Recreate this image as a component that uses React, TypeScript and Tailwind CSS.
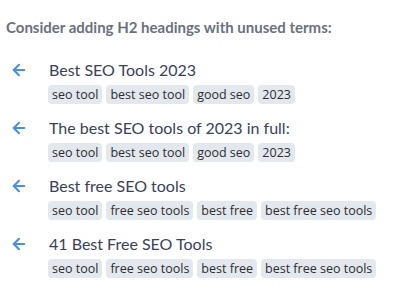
import { ArrowLeft } from 'lucide-react';

export default function App() {
    const suggestions = [
        { title: "Best SEO Tools 2023", terms: ['seo tool', 'best seo tool', 'good seo', '2023'] },
        { title: "The best SEO tools of 2023 in full:", terms: ['seo tool', 'best seo tool', 'good seo', '2023'] },
        { title: "Best free SEO tools", terms: ['seo tool', 'free seo tools', 'best free', 'best free seo tools'] },
        { title: "41 Best Free SEO Tools", terms: ['seo tool', 'free seo tools', 'best free', 'best free seo tools'] }
    ];

    return (
        <div className="w-[396px] h-[290px] bg-white px-[6px] pt-[17px] font-['Lato',sans-serif]">
            <p className="text-[15px] leading-[20px] font-bold text-[#6b7080]">Consider adding H2 headings with unused terms:</p>
            <div className="mt-[22px] flex flex-col gap-[13px]">
                {suggestions.map((s, i) => (
                    <div key={i} className="flex">
                        <div className="w-[43px] shrink-0 pl-[4px] pt-[2px]">
                            <ArrowLeft className="w-[18px] h-[18px] text-[#4a90e2]" strokeWidth={2.75} />
                        </div>
                        <div>
                            <h2 className="text-[16px] leading-[22px] text-[#3a3f5c] whitespace-nowrap">{s.title}</h2>
                            <div className="mt-[4px] -ml-[1px] flex gap-[4px]">
                                {s.terms.map((t, j) => (
                                    <span key={j} className="shrink-0 whitespace-nowrap h-[19px] px-[4px] rounded-[4px] bg-[#e3e8ef] text-[12.5px] leading-[19px] text-[#2d2d2d] font-['Open_Sans',sans-serif]">{t}</span>
                                ))}
                            </div>
                        </div>
                    </div>
                ))}
            </div>
        </div>
    );
}
